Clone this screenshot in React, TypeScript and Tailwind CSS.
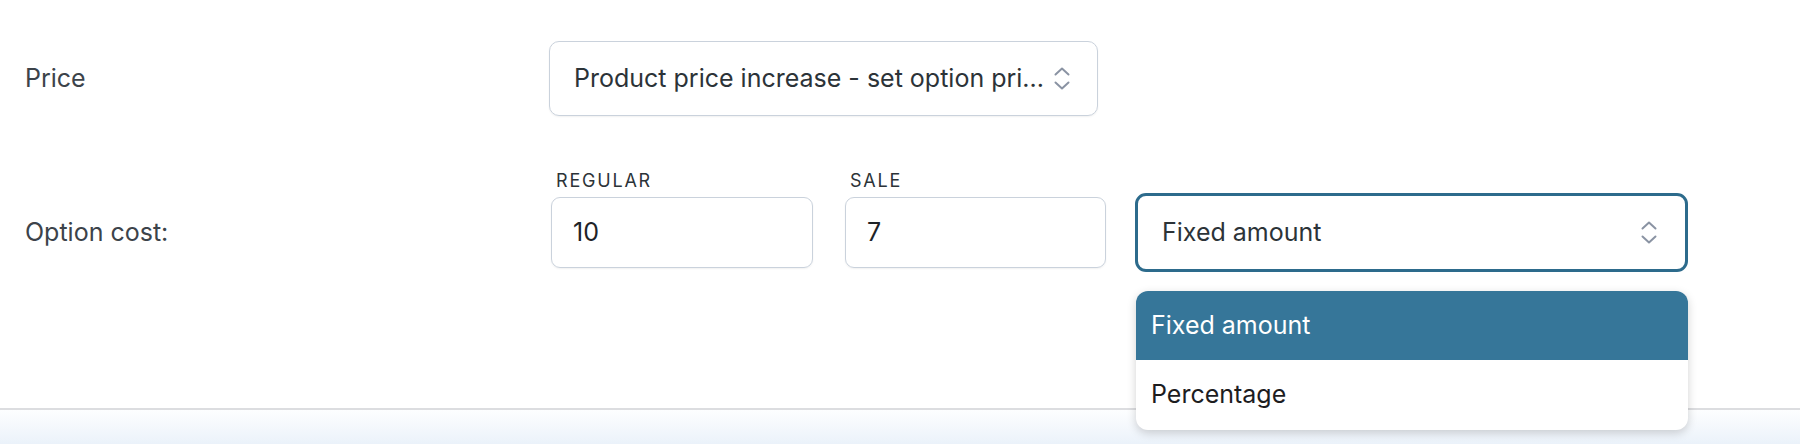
import React from "react";

function UpDown({ className }: { className?: string }) {
  return (
    <svg className={className} width="16" height="23" viewBox="0 0 16 23" fill="none">
      <path d="M1.5 7.5 L8 1.5 L14.5 7.5" stroke="#8a93a3" strokeWidth="2" strokeLinecap="round" strokeLinejoin="round" />
      <path d="M1.5 15.5 L8 21.5 L14.5 15.5" stroke="#8a93a3" strokeWidth="2" strokeLinecap="round" strokeLinejoin="round" />
    </svg>
  );
}

export default function App() {
  return (
    <div className="w-[1800px] h-[444px] bg-white overflow-hidden flex flex-col font-['Inter',sans-serif]">
      <div className="h-[408px] pl-[25px] pt-[41px] flex flex-col">
        {/* Row 1 */}
        <div className="flex items-center">
          <div className="w-[524px] text-[25px] text-[#3c434a] pt-[1px]">Price</div>
          <div className="w-[549px] h-[75px] border-[1.5px] border-[#cad2dc] rounded-[10px] shadow-[0_1px_2px_rgba(0,0,0,0.06)] flex items-center pl-[24px] pr-[27px]">
            <span className="flex-1 text-[25px] text-[#2c3338] whitespace-nowrap">Product price increase - set option pri...</span>
            <UpDown className="ml-[9px]" />
          </div>
        </div>
        {/* Row 2 */}
        <div className="flex items-end mt-[55px]">
          <div className="w-[526px] h-[71px] flex items-center text-[25px] text-[#3c434a]">Option cost:</div>
          <div className="flex flex-col w-[262px]">
            <div className="pl-[5px] text-[18px] leading-[20px] tracking-[0.1em] text-[#2c3338] mb-[6px]">REGULAR</div>
            <div className="h-[71px] border-[1.5px] border-[#cad2dc] rounded-[9px] shadow-[0_1px_2px_rgba(0,0,0,0.06)] flex items-center pl-[21px] text-[25px] text-[#1e2328]">10</div>
          </div>
          <div className="flex flex-col w-[261px] ml-[32px]">
            <div className="pl-[5px] text-[18px] leading-[20px] tracking-[0.1em] text-[#2c3338] mb-[6px]">SALE</div>
            <div className="h-[71px] border-[1.5px] border-[#cad2dc] rounded-[9px] shadow-[0_1px_2px_rgba(0,0,0,0.06)] flex items-center pl-[21px] text-[25px] text-[#1e2328]">7</div>
          </div>
          <div className="relative ml-[29px] -mb-[4px]">
            <div className="w-[553px] h-[79px] border-[3px] border-[#2d6b8c] rounded-[11px] flex items-center pl-[24px] pr-[28px]">
              <span className="flex-1 text-[25px] text-[#2c3338]">Fixed amount</span>
              <UpDown />
            </div>
            <div className="absolute left-[1px] top-[98px] w-[552px] rounded-[12px] bg-white overflow-hidden shadow-[0_3px_10px_rgba(0,0,0,0.18)] z-10">
              <div className="h-[69px] bg-[#367699] flex items-center pl-[15px] text-[25px] text-white">Fixed amount</div>
              <div className="h-[70px] flex items-center pl-[15px] text-[25px] text-[#1d1d1f]">Percentage</div>
            </div>
          </div>
        </div>
      </div>
      <div className="h-[2px] bg-[#dcdde0]" />
      <div className="flex-1 bg-gradient-to-b from-[#fdfeff] to-[#ebf2fa]" />
    </div>
  );
}
